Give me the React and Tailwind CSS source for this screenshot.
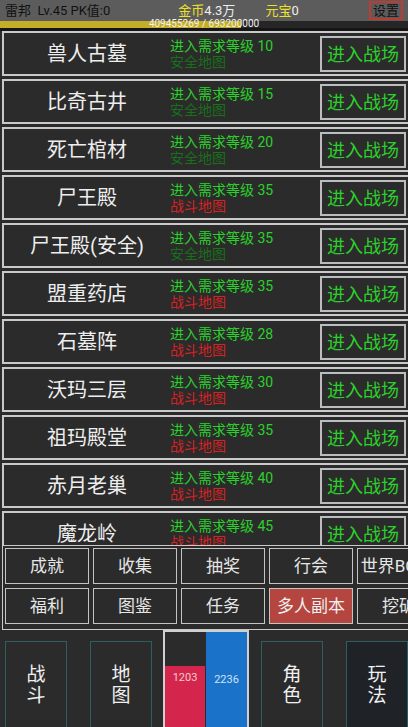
import React from "react";

const maps = [
  { name: "兽人古墓", level: 10, safe: true },
  { name: "比奇古井", level: 15, safe: true },
  { name: "死亡棺材", level: 20, safe: true },
  { name: "尸王殿", level: 35, safe: false },
  { name: "尸王殿(安全)", level: 35, safe: true },
  { name: "盟重药店", level: 35, safe: false },
  { name: "石墓阵", level: 28, safe: false },
  { name: "沃玛三层", level: 30, safe: false },
  { name: "祖玛殿堂", level: 35, safe: false },
  { name: "赤月老巢", level: 40, safe: false },
  { name: "魔龙岭", level: 45, safe: false },
];

const menuRows = [
  ["成就", "收集", "抽奖", "行会", "世界BOSS"],
  ["福利", "图鉴", "任务", "多人副本", "挖矿"],
];

const font = { fontFamily: 'Roboto, "Noto Sans CJK SC", sans-serif' };

const MapRow = ({ map }) => (
  <div className="flex items-start shrink-0 w-[412px] h-[45px] mb-[3px] border-2 border-[#c9c9c9] bg-[#2b2b2b]">
    {/* name */}
    <div className="w-[166px] h-full flex items-center justify-center text-[20px] text-[#eeeeee] whitespace-nowrap">
      {map.name}
    </div>
    {/* level + map type */}
    <div className="w-[150px] pt-[5px] text-[14px] leading-[16px]">
      <p className="text-[#2bd12b]">进入需求等级 {map.level}</p>
      <p className={map.safe ? "text-[#1a6f1a]" : "text-[#d42222]"}>
        {map.safe ? "安全地图" : "战斗地图"}
      </p>
    </div>
    {/* enter button */}
    <div className="mt-[3px] w-[86px] h-[36px] border-2 border-[#bdbdbd] flex items-center justify-center text-[18px] text-[#2bd12b]">
      进入战场
    </div>
  </div>
);

const NavBox = ({ top, bottom, dark }) => (
  <div
    className={`w-[62px] h-[88px] mt-[11px] border border-[#2f5d64] flex flex-col items-center justify-center text-[19px] leading-[21px] text-[#f0f0f0] ${
      dark ? "bg-[#1f2227]" : "bg-[#2b2b2b]"
    }`}
  >
    <span>{top}</span>
    <span>{bottom}</span>
  </div>
);

export default function App() {
  return (
    <div className="w-[408px] h-[727px] overflow-hidden bg-[#2b2b2b] flex flex-col" style={font}>
      {/* top status bar */}
      <div className="h-[21px] shrink-0 bg-[#5c5c5c] flex items-center text-[13px] relative">
        <span className="ml-[5px] text-[#111111]">雷邦&nbsp; Lv.45 PK值:0</span>
        <span className="ml-[68px] text-[#eee02a]">金币</span>
        <span className="text-[#eeeeee]">4.3万</span>
        <span className="ml-[30px] text-[#eee02a]">元宝</span>
        <span className="text-[#eeeeee]">0</span>
        <span className="ml-auto mr-[5px] border-2 border-[#c03a34] px-[2px] leading-[15px] text-[#111111]">
          设置
        </span>
      </div>

      {/* exp bar */}
      <div className="h-[7px] shrink-0 bg-[#262626] relative">
        <div className="h-full w-[59%] bg-[#c4ae27]" />
        <span className="absolute left-0 right-0 top-[-3px] text-center text-[10px] leading-[12px] text-[#f2f2f2]">
          409455269 / 693200000
        </span>
      </div>
      <div className="h-[3px] shrink-0 bg-[#151515]" />

      {/* map list */}
      <div className="h-[514px] shrink-0 overflow-hidden pl-[2px]">
        {maps.map((m) => (
          <MapRow key={m.name} map={m} />
        ))}
      </div>

      {/* function menu */}
      <div className="h-[85px] shrink-0 ml-[2px] w-[420px] border border-[#c9c9c9] bg-[#2b2b2b] pt-[2px] pl-[2px] flex flex-col gap-[4px]">
        {menuRows.map((row, i) => (
          <div key={i} className="flex gap-[4px]">
            {row.map((label) => (
              <div
                key={label}
                className={`w-[84px] h-[36px] shrink-0 border border-[#c4c4c4] overflow-hidden whitespace-nowrap text-center text-[17px] leading-[34px] ${
                  label === "多人副本" ? "bg-[#b5453f] text-[#f0f0f0]" : "bg-[#2b2b2b] text-[#e6e6e6]"
                }`}
              >
                {label}
              </div>
            ))}
          </div>
        ))}
      </div>

      {/* bottom nav */}
      <div className="flex-1 flex items-start pl-[5px] bg-[#2b2b2b]">
        <NavBox top="战" bottom="斗" />
        <div className="ml-[23px]">
          <NavBox top="地" bottom="图" />
        </div>
        <div className="ml-[11px] w-[86px] h-[99px] border-2 border-[#d0d0d0] flex items-end text-[11px]">
          <div className="w-[40px] h-[61px] bg-[#d4264c] text-[#f3c8d2] text-center pt-[4px]">1203</div>
          <div className="ml-[1px] flex-1 h-full bg-[#1a72c9] text-[#cfe2f6] text-center pt-[40px]">2236</div>
        </div>
        <div className="ml-[12px]">
          <NavBox top="角" bottom="色" />
        </div>
        <div className="ml-[23px]">
          <NavBox top="玩" bottom="法" dark />
        </div>
      </div>
    </div>
  );
}
